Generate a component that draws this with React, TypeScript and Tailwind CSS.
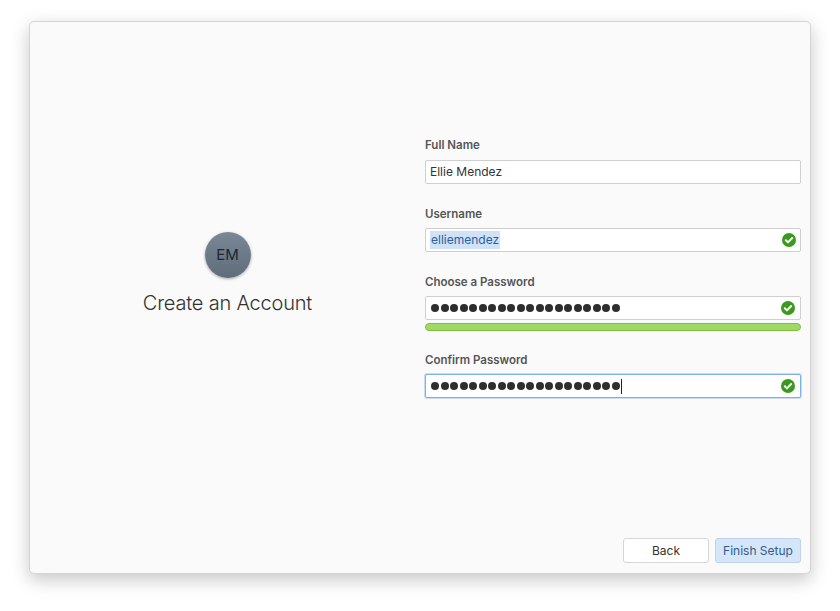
import React from "react";

const Check = () => (
  <svg width="14" height="14" viewBox="0 0 14 14" className="shrink-0">
    <circle cx="7" cy="7" r="7" fill="#3a9a1e" />
    <path d="M3.8 7.2l2.2 2.2 4.2-4.4" stroke="white" strokeWidth="2" fill="none" strokeLinecap="round" strokeLinejoin="round" />
  </svg>
);

const Dots = ({ caret }: { caret?: boolean }) => (
  <div className="flex items-center">
    {Array.from({ length: 20 }).map((_, i) => (
      <div key={i} className="w-[8px] h-[8px] rounded-full bg-[#2e2e2e] mr-[1.5px]" />
    ))}
    {caret && <div className="w-[1px] h-[15px] bg-[#222]" />}
  </div>
);

export default function App() {
  const font = { fontFamily: "Inter, 'Open Sans', sans-serif" };
  return (
    <div className="w-[840px] h-[611px] bg-white pt-[21px] pl-[29px]" style={font}>
      <div className="w-[782px] h-[553px] bg-[#fafafa] rounded-[5px] border border-[#d4d4d4] shadow-[0_6px_18px_rgba(0,0,0,0.22)] flex flex-col">
        <div className="flex flex-1">
          <div className="w-[395px] flex flex-col items-center pt-[210px]">
            <div className="w-[46px] h-[46px] rounded-full bg-gradient-to-b from-[#7a8796] to-[#5f6c7a] shadow-[0_1px_3px_rgba(0,0,0,0.35)] flex items-center justify-center text-[15px] text-[#1e2530]">
              EM
            </div>
            <div className="mt-[10px] text-[20px] font-light text-[#333] tracking-[-0.2px]">Create an Account</div>
          </div>
          <div className="w-[376px] pt-[115px] text-[11.5px]">
            <div className="font-semibold text-[#555] h-[16px]">Full Name</div>
            <div className="mt-[7px] h-[24px] bg-white border border-[#cfcfcf] rounded-[2px] px-[4px] flex items-center text-[12px] text-[#333]">Ellie Mendez</div>
            <div className="mt-[22px] font-semibold text-[#555] h-[16px]">Username</div>
            <div className="mt-[6px] h-[24px] bg-white border border-[#cfcfcf] rounded-[2px] px-[4px] flex items-center justify-between text-[12px]">
              <span className="bg-[#cfe2f7] text-[#2d5fa0] px-[1px]">elliemendez</span>
              <Check />
            </div>
            <div className="mt-[22px] font-semibold text-[#555] h-[16px]">Choose a Password</div>
            <div className="mt-[6px] h-[24px] bg-white border border-[#cfcfcf] rounded-[2px] px-[5px] flex items-center justify-between">
              <Dots />
              <Check />
            </div>
            <div className="mt-[3px] h-[8px] rounded-full bg-[#9fda62] border border-[#7fbf43]" />
            <div className="mt-[21px] font-semibold text-[#555] h-[16px]">Confirm Password</div>
            <div className="mt-[6px] h-[24px] bg-white border border-[#7fb0e6] shadow-[0_0_0_1px_rgba(127,176,230,0.4)] rounded-[2px] px-[5px] flex items-center justify-between">
              <Dots caret />
              <Check />
            </div>
          </div>
        </div>
        <div className="flex justify-end gap-[6px] pr-[9px] pb-[10px]">
          <div className="w-[86px] h-[25px] bg-white border border-[#d6d6d6] rounded-[3px] flex items-center justify-center text-[12px] text-[#333]">Back</div>
          <div className="w-[86px] h-[25px] bg-[#d5e6f9] border border-[#bcd4ef] rounded-[3px] flex items-center justify-center text-[12px] text-[#2f5d8e]">Finish Setup</div>
        </div>
      </div>
    </div>
  );
}
